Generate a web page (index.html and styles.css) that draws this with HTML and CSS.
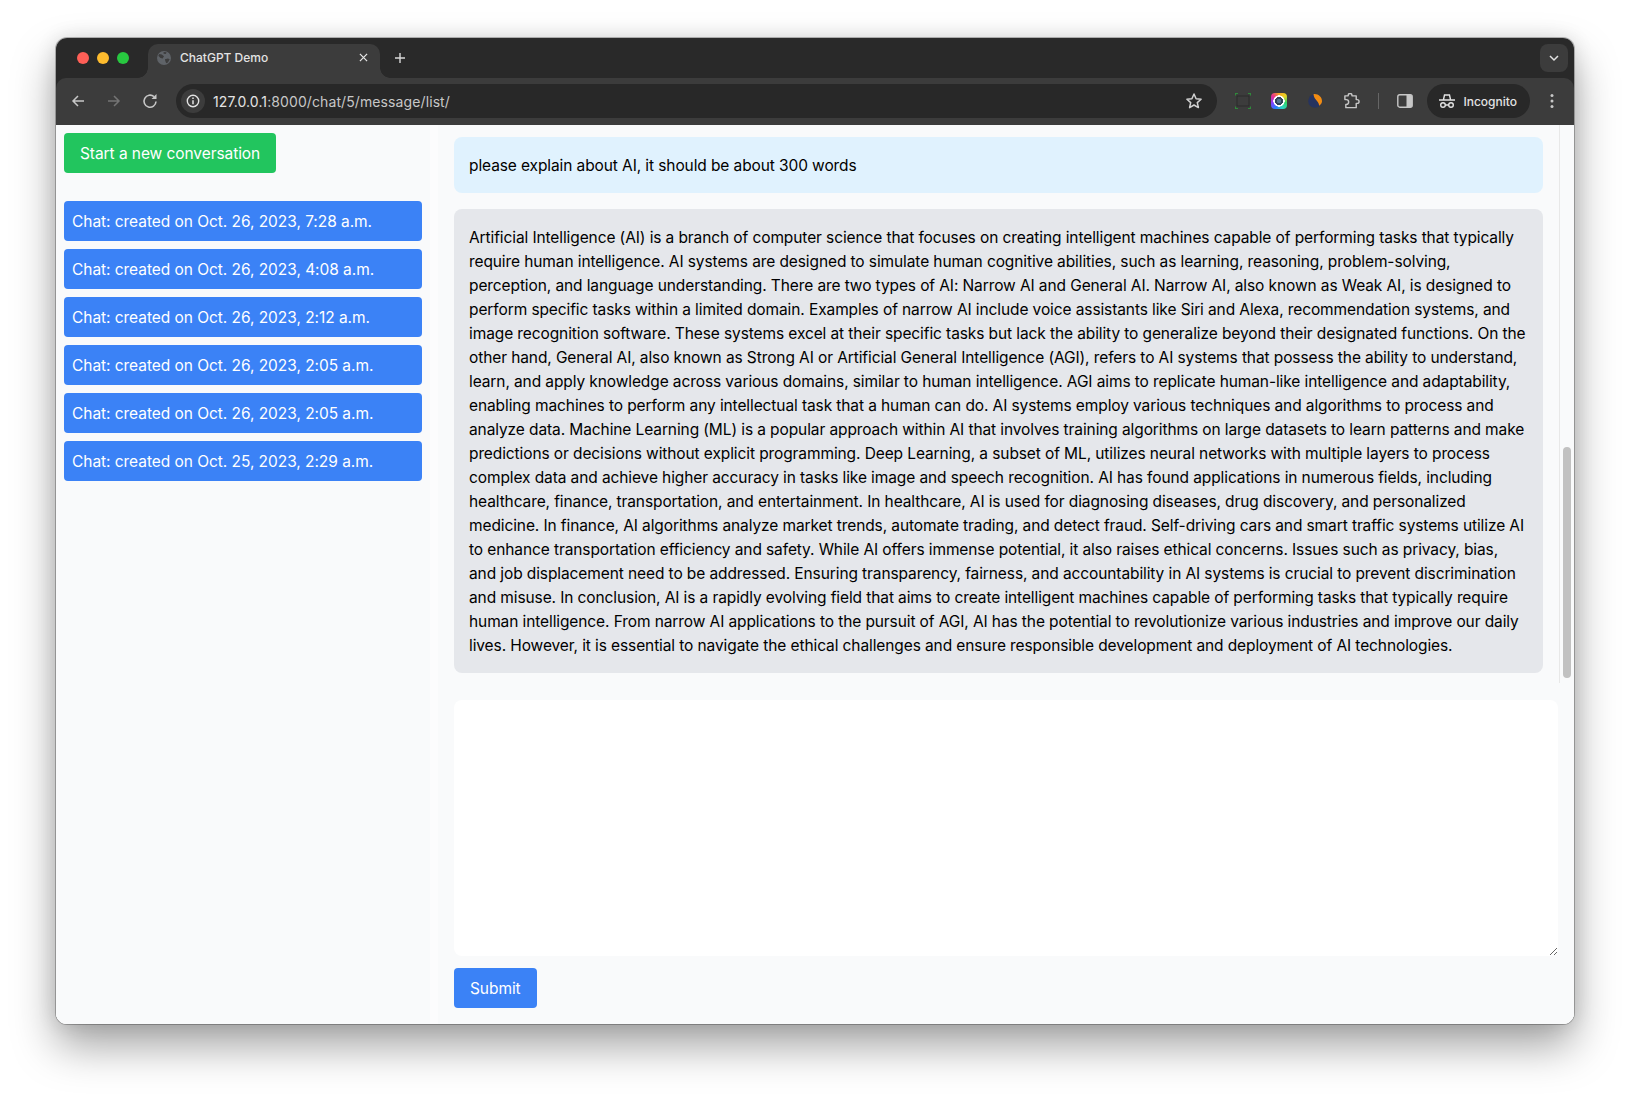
FILE: index.html
```html
<!DOCTYPE html>
<html lang="en">
    <head>
        <meta charset="UTF-8" />
        <title>ChatGPT Demo</title>
        <link rel="stylesheet" href="styles.css">
    </head>
    <body>
        <div class="window">
            <div class="chrome">
                <div class="tabstrip">
                    <div class="lights">
                        <span class="light red"></span>
                        <span class="light yellow"></span>
                        <span class="light green"></span>
                    </div>
                    <div class="tab">
                        <svg class="globe" width="14" height="14" viewBox="0 0 16 16">
                            <circle cx="8" cy="8" r="8" fill="#5f6368"/>
                            <path d="M2.500 3.500l3 .5 2.500 2-1.500 2.500-2.500-.5-2.500-2.500zM9 9.500l3.500-1 2 1-2 3.500-2 1-1-2.500z" fill="#3c3c3c"/>
                            <path d="M7.500 1l3.500.5-1 2-2.500-.5z" fill="#3c3c3c"/>
                        </svg>
                        <span class="tab-title">ChatGPT Demo</span>
                        <svg class="tab-close" width="9" height="9" viewBox="0 0 10 10">
                            <path d="M1 1l8 8M9 1l-8 8" stroke="#e3e3e3" stroke-width="1.400"/>
                        </svg>
                    </div>
                    <svg class="new-tab" width="12" height="12" viewBox="0 0 12 12">
                        <path d="M6 1v10M1 6h10" stroke="#d8d8d8" stroke-width="1.400"/>
                    </svg>
                    <div class="tab-search">
                        <svg width="10" height="7" viewBox="0 0 10 7">
                            <path d="M1 1l4 4 4-4" fill="none" stroke="#e3e3e3" stroke-width="1.500"/>
                        </svg>
                    </div>
                </div>
                <div class="toolbar">
                    <svg class="nav" width="16" height="16" viewBox="0 0 16 16">
                        <path d="M14 8H3M8 3L3 8l5 5" fill="none" stroke="#c7c7c7" stroke-width="1.500"/>
                    </svg>
                    <svg class="nav" width="16" height="16" viewBox="0 0 16 16">
                        <path d="M2 8h11M8 3l5 5-5 5" fill="none" stroke="#747474" stroke-width="1.500"/>
                    </svg>
                    <svg class="nav" width="16" height="16" viewBox="0 0 16 16">
                        <path d="M14 8.500A6 6 0 1 1 12 3.700" fill="none" stroke="#c7c7c7" stroke-width="1.600"/>
                        <path d="M14.500 1v5H9.500z" fill="#c7c7c7"/>
                    </svg>
                    <div class="omnibox">
                        <div class="site-info">
                            <svg width="14" height="14" viewBox="0 0 14 14">
                                <circle cx="7" cy="7" r="5.700" fill="none" stroke="#e3e3e3" stroke-width="1.400"/>
                                <path d="M7 6.200v4M7 3.600v1.500" stroke="#e3e3e3" stroke-width="1.500"/>
                            </svg>
                        </div>
                        <span class="url">127.0.0.1<span class="url-dim">:8000/chat/5/message/list/</span></span>
                        <svg class="star" width="18" height="18" viewBox="0 0 18 18">
                            <path d="M9 2l2.100 4.700 5 .5-3.800 3.400 1.100 5L9 13l-4.400 2.600 1.100-5L1.900 7.200l5-.5z" fill="none" stroke="#d0d0d0" stroke-width="1.500" stroke-linejoin="round"/>
                        </svg>
                    </div>
                    <div class="extensions">
                        <svg width="16" height="16" viewBox="0 0 16 16">
                            <rect x="2" y="3" width="12" height="10" fill="none" stroke="#2a2a2a" stroke-width="1"/>
                            <path d="M.5 2.500V.5H3M13 .5h2.500v2M15.500 13.500v2H13M3 15.500H.5v-2" fill="none" stroke="#2f8a3a" stroke-width="1.200"/>
                        </svg>
                        <span class="lens"></span>
                        <svg width="16" height="16" viewBox="0 0 16 16">
                            <circle cx="8" cy="8" r="6.800" fill="#26335f"/>
                            <path d="M6.500 1.200C11 .5 15.300 4 15 8.500c-.2 2-1.500 3.500-3 4.300C12.500 8.500 7 7 6.500 1.200z" fill="#f28c12"/>
                        </svg>
                        <svg width="17" height="17" viewBox="0 0 18 18">
                            <path d="M2 3.500h3.500v-.5a2 2 0 0 1 4 0v.5H14v4h1a2 2 0 0 1 0 4h-1v4.500H3v-3.500h.5a2 2 0 0 0 0-5H2z" fill="none" stroke="#c7c7c7" stroke-width="1.500" stroke-linejoin="round" transform="translate(0 -.5)"/>
                        </svg>
                        <span class="divider"></span>
                        <svg width="16" height="16" viewBox="0 0 16 16">
                            <rect x=".8" y="1.800" width="14.400" height="12.400" rx="2" fill="none" stroke="#c7c7c7" stroke-width="1.400"/>
                            <path d="M9.500 2h4a1.500 1.500 0 0 1 1.500 1.500v9a1.500 1.500 0 0 1-1.500 1.500h-4z" fill="#c7c7c7"/>
                        </svg>
                    </div>
                    <div class="incognito">
                        <svg width="16" height="16" viewBox="0 0 16 16">
                            <path d="M4.500 6.500L5.500 2h5l1 4.500M0 7h16" fill="none" stroke="#e3e3e3" stroke-width="1.400"/>
                            <circle cx="4" cy="12" r="2.300" fill="none" stroke="#e3e3e3" stroke-width="1.400"/>
                            <circle cx="12" cy="12" r="2.300" fill="none" stroke="#e3e3e3" stroke-width="1.400"/>
                            <path d="M6.300 12h3.400" stroke="#e3e3e3" stroke-width="1.400"/>
                        </svg>
                        <span>Incognito</span>
                    </div>
                    <svg class="menu" width="4" height="16" viewBox="0 0 4 16">
                        <circle cx="2" cy="2.500" r="1.500" fill="#c7c7c7"/>
                        <circle cx="2" cy="8" r="1.500" fill="#c7c7c7"/>
                        <circle cx="2" cy="13.500" r="1.500" fill="#c7c7c7"/>
                    </svg>
                </div>
            </div>

            <div class="page">
                <aside class="sidebar">
                    <a class="btn btn-new">Start a new conversation</a>
                    <ul class="chat-list">
                        <li>Chat: created on Oct. 26, 2023, 7:28 a.m.</li>
                        <li>Chat: created on Oct. 26, 2023, 4:08 a.m.</li>
                        <li>Chat: created on Oct. 26, 2023, 2:12 a.m.</li>
                        <li>Chat: created on Oct. 26, 2023, 2:05 a.m.</li>
                        <li>Chat: created on Oct. 26, 2023, 2:05 a.m.</li>
                        <li>Chat: created on Oct. 25, 2023, 2:29 a.m.</li>
                    </ul>
                </aside>
                <main class="main">
                    <div class="messages">
                        <div class="msg msg-user">please explain about AI, it should be about 300 words</div>
                        <div class="msg msg-bot">Artificial Intelligence (AI) is a branch of computer science that focuses on creating intelligent machines capable of performing tasks that typically<br>require human intelligence. AI systems are designed to simulate human cognitive abilities, such as learning, reasoning, problem-solving,<br>perception, and language understanding. There are two types of AI: Narrow AI and General AI. Narrow AI, also known as Weak AI, is designed to<br>perform specific tasks within a limited domain. Examples of narrow AI include voice assistants like Siri and Alexa, recommendation systems, and<br>image recognition software. These systems excel at their specific tasks but lack the ability to generalize beyond their designated functions. On the<br>other hand, General AI, also known as Strong AI or Artificial General Intelligence (AGI), refers to AI systems that possess the ability to understand,<br>learn, and apply knowledge across various domains, similar to human intelligence. AGI aims to replicate human-like intelligence and adaptability,<br>enabling machines to perform any intellectual task that a human can do. AI systems employ various techniques and algorithms to process and<br>analyze data. Machine Learning (ML) is a popular approach within AI that involves training algorithms on large datasets to learn patterns and make<br>predictions or decisions without explicit programming. Deep Learning, a subset of ML, utilizes neural networks with multiple layers to process<br>complex data and achieve higher accuracy in tasks like image and speech recognition. AI has found applications in numerous fields, including<br>healthcare, finance, transportation, and entertainment. In healthcare, AI is used for diagnosing diseases, drug discovery, and personalized<br>medicine. In finance, AI algorithms analyze market trends, automate trading, and detect fraud. Self-driving cars and smart traffic systems utilize AI<br>to enhance transportation efficiency and safety. While AI offers immense potential, it also raises ethical concerns. Issues such as privacy, bias,<br>and job displacement need to be addressed. Ensuring transparency, fairness, and accountability in AI systems is crucial to prevent discrimination<br>and misuse. In conclusion, AI is a rapidly evolving field that aims to create intelligent machines capable of performing tasks that typically require<br>human intelligence. From narrow AI applications to the pursuit of AGI, AI has the potential to revolutionize various industries and improve our daily<br>lives. However, it is essential to navigate the ethical challenges and ensure responsible development and deployment of AI technologies.</div>
                        <div class="scrollbar"><span class="thumb"></span></div>
                    </div>
                    <form class="composer">
                        <textarea class="prompt"></textarea>
                        <button class="btn btn-submit" type="button">Submit</button>
                    </form>
                </main>
            </div>
        </div>
    </body>
</html>
```

FILE: styles.css
```css
* {
    box-sizing: border-box;
}
html,
body {
    height: 100%;
}
body {
    margin: 0;
    background: #fff;
    font-family: Inter, "Liberation Sans", sans-serif;
    overflow: hidden;
    padding: 38px 56px 74px;
}

/* browser frame */
.window {
    height: 986px;
    border-radius: 11px;
    overflow: hidden;
    display: flex;
    flex-direction: column;
    background: #f9fafb;
    box-shadow: 0 0 0 1px rgba(0, 0, 0, 0.25), 0 22px 44px rgba(0, 0, 0, 0.36), 0 0 20px rgba(0, 0, 0, 0.12);
}
.chrome {
    flex: none;
    background: #292929;
}
.tabstrip {
    height: 40px;
    display: flex;
    align-items: center;
}
.lights {
    display: flex;
    gap: 8px;
    padding-left: 21px;
    width: 92px;
}
.light {
    width: 12px;
    height: 12px;
    border-radius: 50%;
}
.red { background: #ff5f57; }
.yellow { background: #febc2e; }
.green { background: #28c840; }
.tab {
    position: relative;
    align-self: flex-end;
    width: 232px;
    height: 34px;
    background: #3c3c3c;
    border-radius: 10px 10px 0 0;
    display: flex;
    align-items: center;
    padding: 0 12px 7px 9px;
}
/* the curves where the tab runs into the toolbar */
.tab::before,
.tab::after {
    content: "";
    position: absolute;
    bottom: 0;
    width: 10px;
    height: 10px;
}
.tab::before {
    left: -10px;
    background: radial-gradient(circle at 0 0, #292929 9.500px, #3c3c3c 10px);
}
.tab::after {
    right: -10px;
    background: radial-gradient(circle at 100% 0, #292929 9.500px, #3c3c3c 10px);
}
.globe {
    flex: none;
}
.tab-title {
    flex: 1;
    margin-left: 9px;
    font-size: 12px;
    font-weight: 500;
    color: #e3e3e3;
}
.new-tab {
    margin-left: 14px;
}
.tab-search {
    margin-left: auto;
    margin-right: 6px;
    width: 28px;
    height: 28px;
    border-radius: 8px;
    background: #3c3c3c;
    display: flex;
    align-items: center;
    justify-content: center;
}
.toolbar {
    height: 47px;
    background: #3c3c3c;
    display: flex;
    align-items: center;
    padding: 0 20px 1px 14px;
    border-radius: 10px 10px 0 0;
}
.nav {
    margin-right: 20px;
    flex: none;
}
.omnibox {
    flex: 1;
    height: 34px;
    margin-left: -2px;
    background: #282828;
    border-radius: 17px;
    display: flex;
    align-items: center;
    padding: 0 14px 0 5px;
}
.site-info {
    width: 24px;
    height: 24px;
    border-radius: 50%;
    background: #3c3c3c;
    display: flex;
    align-items: center;
    justify-content: center;
}
.url {
    flex: 1;
    margin-left: 8px;
    font-size: 14px;
    letter-spacing: 0.1px;
    color: #e3e3e3;
}
.url-dim {
    color: #c7c7c7;
}
.extensions {
    display: flex;
    align-items: center;
    gap: 20px;
    margin-left: 18px;
}
.lens {
    width: 16px;
    height: 16px;
    border-radius: 4px;
    background:
        radial-gradient(circle, #54748f 0 2px, #2f4358 2.300px 4px, #fff 4.300px 5.500px, transparent 5.800px),
        conic-gradient(#f5a623, #e8d323, #2fd36a, #2fd3c4, #2a7bff, #8a3dff, #e8308c, #f5a623);
}
.divider {
    width: 1px;
    height: 16px;
    margin: 0 -2px;
    background: #666;
}
.incognito {
    height: 34px;
    margin-left: 14px;
    padding: 0 13px 0 12px;
    border-radius: 17px;
    background: #282828;
    display: flex;
    align-items: center;
    gap: 8px;
    font-size: 12px;
    font-weight: 500;
    color: #e3e3e3;
}
.menu {
    margin-left: 20px;
}

/* page inside the browser */
.page {
    flex: 1;
    min-height: 0;
    display: flex;
    background: #fcfcfd;
}
.sidebar {
    width: 374px;
    flex: none;
    padding: 8px;
    background: #f9fafb;
}
.btn {
    display: inline-block;
    border: 0;
    border-radius: 4px;
    color: #fff;
    font-family: inherit;
    font-size: 15.500px;
    letter-spacing: -0.07px;
    line-height: 24px;
    padding: 9px 16px 7px;
}
.btn-new {
    background: #22c55e;
}
.chat-list {
    list-style: none;
    margin: 28px 0 0;
    padding: 0;
    display: flex;
    flex-direction: column;
    gap: 8px;
}
.chat-list li {
    background: #3b82f6;
    border-radius: 4px;
    color: #fff;
    font-size: 15.500px;
    letter-spacing: -0.05px;
    line-height: 24px;
    padding: 9px 8px 7px;
}
.main {
    flex: 1;
    min-width: 0;
    margin-left: 8px;
    padding-left: 16px;
    background: #f9fafb;
    display: flex;
    flex-direction: column;
}
.messages {
    height: 558px;
    flex: none;
    padding: 12px 31px 0 0;
    position: relative;
    display: flex;
    flex-direction: column;
    gap: 16px;
}
.msg {
    border-radius: 8px;
    padding: 17px 16px 15px 15px;
    font-size: 15.500px;
    letter-spacing: -0.1px;
    line-height: 24px;
    color: #000;
    white-space: nowrap;
}
.msg-user {
    background: #e0f2fe;
}
.msg-bot {
    background: #e5e7eb;
}
.scrollbar {
    position: absolute;
    top: 0;
    right: 0;
    bottom: 0;
    width: 15px;
    border-left: 1px solid #e8e8e8;
}
.thumb {
    position: absolute;
    left: 3px;
    right: 3px;
    top: 322px;
    height: 231px;
    border-radius: 4px;
    background: #c1c1c1;
}
.composer {
    padding: 17px 16px 0 0;
}
.prompt {
    display: block;
    width: 100%;
    height: 256px;
    border: 0;
    outline: 0;
    border-radius: 8px;
    background: #fff;
    padding: 8px;
}
.btn-submit {
    margin-top: 12px;
    background: #3b82f6;
}
```
